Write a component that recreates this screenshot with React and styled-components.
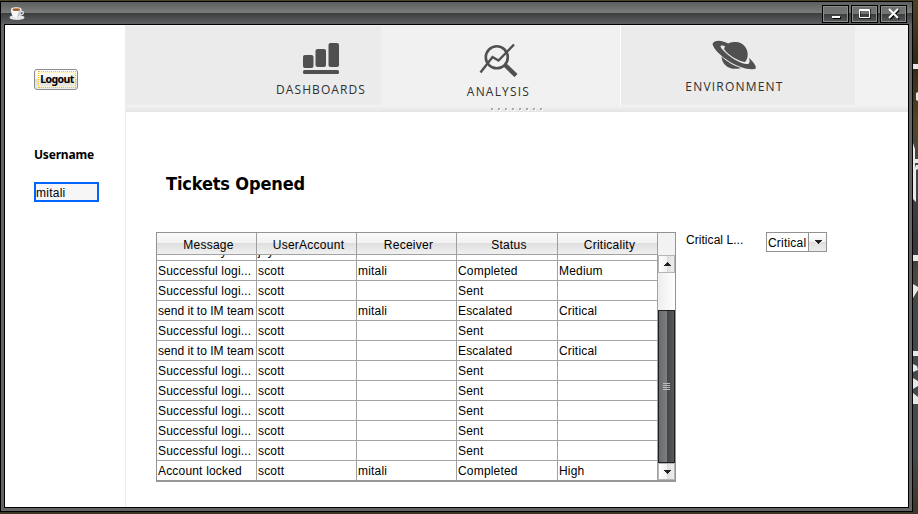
import React from "react";
import styled, { createGlobalStyle } from "styled-components";

const Global = createGlobalStyle`
  *{box-sizing:border-box}
  html,body{margin:0;width:918px;height:514px;overflow:hidden}
  body{font:12px "Liberation Sans",Arial,sans-serif;color:#000}
  svg{display:block;flex:none}
`;
const Desktop = styled.div`
  position:relative;width:918px;height:514px;padding-top:1px;
  background:linear-gradient(#4c4424,#2f2a15 12%,#514824 24%,#46464a 32%,#37373a 49%,#4a493d 53%,#45484c 62%,#46484a 73%,#484b4b 88%,#3b3625);
`;
const Scenery = styled.svg`position:absolute;left:913px;top:0;`;
const Window = styled.div`
  width:913px;height:511px;border:1px solid #000;display:flex;flex-direction:column;
  background:#646464;
`;
const TitleBar = styled.div`
  height:22px;flex:none;display:flex;align-items:center;padding:0 5px 0 7px;gap:2px;
  background:linear-gradient(#5e6060,#7b7d7d 11px,#3c3d3e 11px,#5d5f60);
`;
const Spacer = styled.div`flex:1;`;
const WinButton = styled.div`
  width:27px;height:18px;margin-top:1px;border:1px solid #000;
  box-shadow:inset 0 0 0 1px #8b8d8d;display:flex;align-items:center;justify-content:center;
  background:linear-gradient(#6d6f6f,#747676 50%,#3b3c3d 50%,#57595a);
`;
const Content = styled.div`
  width:905px;height:484px;margin-left:3px;border:1px solid #000;background:#fff;display:flex;
`;
const Side = styled.div`
  width:121px;border-right:1px solid #ececec;padding:44px 0 0 29px;
  font:bold 12px "Noto Sans","Open Sans",sans-serif;
`;
const Logout = styled.div`
  width:44px;height:21px;border:1px solid #8c8c8c;border-radius:3px;padding:1px 2px;
  background:linear-gradient(#fff,#f1f1f1 50%,#dcdcdc 50%,#ededed);
`;
const Focus = styled.div`
  width:38px;height:17px;border:1px dotted #ffc000;box-shadow:inset 0 0 0 1px #fff3b8;margin:0 1px;
  display:flex;align-items:center;justify-content:center;
  font-size:10.5px;letter-spacing:-.55px;white-space:nowrap;line-height:15px;
`;
const FieldLabel = styled.div`margin-top:56px;height:18px;line-height:18px;letter-spacing:-.2px;`;
const Field = styled.div`
  margin-top:18px;width:65px;height:20px;border:2px solid #0064ff;background:#f6f6f6;
  font:12px/18px "Liberation Sans",sans-serif;letter-spacing:.25px;
`;
const Main = styled.div`flex:1;display:flex;flex-direction:column;`;
const Nav = styled.div`
  height:87px;display:flex;flex-direction:column;background:linear-gradient(#f2f2f2 79px,#f3f3f3 80px,#e4e4e4);
`;
const Tabs = styled.div`display:flex;height:79px;margin-top:1px;`;
const Tab = styled.div`
  width:${p => p.$w}px;padding:${p => p.$top}px 0 0 ${p => p.$left}px;
  background:${p => p.$shaded ? "#ebebeb" : "#f1f1f1"};
  border-right:${p => p.$rule ? "1px solid #fff" : "0"};
`;
const TabBody = styled.div`width:${p => p.$w}px;display:flex;flex-direction:column;align-items:center;`;
const TabText = styled.div`
  margin-top:${p => p.$gap}px;font:12px/16px "Open Sans","Noto Sans",sans-serif;color:#303030;
  letter-spacing:${p => p.$ls}px;white-space:nowrap;
`;
const Grip = styled.svg`margin:2px 0 0 365px;`;
const Title = styled.div`
  height:24px;margin:60px 0 0 40px;font:bold 18px/24px "DejaVu Sans Condensed","DejaVu Sans",sans-serif;
  font-stretch:condensed;letter-spacing:-.14px;white-space:nowrap;
`;
const Row = styled.div`display:flex;margin:36px 0 0 30px;`;
const TableBox = styled.div`
  width:520px;height:250px;border:1px solid #939393;border-bottom:2px solid #969696;display:flex;
`;
const Grid = styled.div`width:501px;`;
const cols = "100px 100px 100px 101px 100px";
const Head = styled.div`
  display:grid;grid-template-columns:${cols};height:22px;border-bottom:1px solid #a2a2a2;
`;
const HeadCell = styled.div`
  border-right:1px solid #9e9e9e;text-align:center;line-height:24px;height:21px;padding-left:4px;letter-spacing:.25px;
  background:linear-gradient(#fafafa,#f2f2f2 10px,#dedede 10px,#f0f0f0);
`;
const Viewport = styled.div`
  height:225px;overflow:hidden;display:flex;flex-direction:column;justify-content:flex-end;
`;
const Line = styled.div`
  display:grid;grid-template-columns:${cols};flex:none;
  border-bottom:${p => p.$last ? "0" : "1px solid #a2a2a2"};
  height:${p => p.$last ? 19 : 20}px;
`;
const Cell = styled.div`
  border-right:1px solid #a2a2a2;padding-left:1px;line-height:21px;height:19px;white-space:nowrap;overflow:hidden;
  letter-spacing:${p => p.$tight ? 0.02 : 0.18}px;
`;
const Scroll = styled.div`
  width:17px;display:flex;flex-direction:column;padding-top:22px;background:#f2f2f2;
`;
const Arrow = styled.div`
  height:${p => p.$down ? 17 : 18}px;border:1px solid #b5b5b5;display:flex;align-items:center;justify-content:center;
  background:linear-gradient(90deg,#fff,#f1f1f1 50%,#dcdcdc 50%,#eee);
`;
const Track = styled.div`height:37px;background:linear-gradient(90deg,#ededed,#fff);`;
const Thumb = styled.div`
  height:153px;border:1px solid #1e2021;background:linear-gradient(90deg,#686a6b,#7c7e7f 50%,#414345 50%,#58595a);
  display:flex;align-items:center;justify-content:center;
`;
const FilterLabel = styled.div`margin-left:10px;width:80px;line-height:16px;letter-spacing:.05px;`;
const Combo = styled.div`
  width:61px;height:20px;border:1px solid #929292;display:flex;line-height:20px;padding-left:1px;letter-spacing:.2px;
`;
const ComboText = styled.div`width:41px;white-space:nowrap;`;
const ComboButton = styled.div`
  width:18px;border-left:1px solid #929292;display:flex;align-items:center;justify-content:center;
  background:linear-gradient(#fff,#f2f2f2 50%,#dedede 50%,#ededed);
`;

const S = (receiver, status, criticality, message = "Successful logi...") =>
  [message, "scott", receiver, status, criticality];
const rows = [
  ["tickets today", "jay", "", "", ""],
  S("mitali", "Completed", "Medium"),
  S("", "Sent", ""),
  S("mitali", "Escalated", "Critical", "send it to IM team"),
  S("", "Sent", ""),
  S("", "Escalated", "Critical", "send it to IM team"),
  S("", "Sent", ""), S("", "Sent", ""), S("", "Sent", ""), S("", "Sent", ""), S("", "Sent", ""),
  S("mitali", "Completed", "High", "Account locked"),
];

const Triangle = ({ up }) => (
  <svg width="8" height="4" shapeRendering="crispEdges">
    <path d={up ? "M0 4L4 0L8 4Z" : "M0 0H8L4 4Z"} fill="#222" />
  </svg>
);

export default function App() {
  return (
    <>
      <Global />
      <Desktop>
        <Scenery width="5" height="514">
          <path d="M0 64h5v5H0zM3 93l2-1v9l-2-1zM0 143l2 6v10h3v4H2v5l1-3h2v4l-2 1v32l-3-3zM0 255h5v6H0zM0 284l5 3v3l-5 8zM0 351h5v5H0v8l4 2 1 4-5 2v6l5 3v5l-5 3v4l5 4v7H0z" fill="#e8e8e6" />
        </Scenery>
        <Window>
          <TitleBar>
            <svg width="18" height="16" viewBox="0 0 18 16">
              <ellipse cx="9" cy="12.5" rx="7.5" ry="2.6" fill="#e5e5e5" />
              <path d="M12.5 6.5c4-1.2 4 3.2-.5 3.4" fill="none" stroke="#d9dde2" strokeWidth="1.3" />
              <path d="M3 4.5c0 4 1.5 7.2 3.5 8h3.5c2.5-1.5 3.5-4 3.5-8z" fill="#f7f7f7" />
              <path d="M9 12.5c2.6-1.1 4-4 4.2-7.5l-2.2 1z" fill="#bec2c7" />
              <ellipse cx="8.2" cy="4.5" rx="5.2" ry="2.2" fill="#fff" />
              <ellipse cx="8.3" cy="4.7" rx="4" ry="1.4" fill="#a4622d" />
            </svg>
            <Spacer />
            <WinButton><svg width="10" height="10"><path d="M2 8h8v2H2z" fill="#000" /><path d="M1 7h8v2H1z" fill="#fff" /></svg></WinButton>
            <WinButton><svg width="13" height="11"><path d="M2 2h11v9H2z" fill="none" stroke="#000" strokeWidth="1" /><path d="M1.5 1.5h10v8h-10zM1 2.5h11" fill="none" stroke="#fff" /></svg></WinButton>
            <WinButton><svg width="13" height="12"><path d="M3 2l9 9M12 2l-9 9" stroke="#000" strokeWidth="2" /><path d="M2 1l9 9M11 1L2 10" stroke="#fff" strokeWidth="2" /></svg></WinButton>
          </TitleBar>
          <Content>
            <Side>
              <Logout><Focus>Logout</Focus></Logout>
              <FieldLabel>Username</FieldLabel>
              <Field>mitali</Field>
            </Side>
            <Main>
              <Nav>
                <Tabs>
                  <Tab $w={255} $left={150} $top={17} $shaded>
                    <TabBody $w={90}>
                      <svg width="36" height="31" fill="#505050">
                        <rect y="12" width="10.5" height="13" rx="2" />
                        <rect x="12.5" y="6" width="10.5" height="18" rx="2" />
                        <rect x="25.5" width="10.5" height="24" rx="2" />
                        <rect y="27" width="36" height="4" rx="1.5" />
                      </svg>
                      <TabText $gap={8} $ls={1.1}>DASHBOARDS</TabText>
                    </TabBody>
                  </Tab>
                  <Tab $w={240} $left={85} $top={17} $rule>
                    <TabBody $w={65}>
                      <svg width="39" height="34" viewBox="0 0 39 34" fill="none" stroke="#505050">
                        <circle cx="17.8" cy="14.3" r="11" strokeWidth="2.6" />
                        <path d="M1.5 29.5L13.5 14L19.5 17.5L35 1.5" strokeWidth="2.4" />
                        <path d="M26 22L37 32.5" strokeWidth="4.4" />
                      </svg>
                      <TabText $gap={7} $ls={1.2}>ANALYSIS</TabText>
                    </TabBody>
                  </Tab>
                  <Tab $w={234} $left={64} $top={14} $shaded>
                    <TabBody $w={99}>
                      <svg width="45" height="31" viewBox="0 0 45 31">
                        <path d="M1 3C4-1 12 1 17 4L14 7C9 4 7 6 10 9C17 17 28 24 35 24C38 24 38 21 37 18C43 23 46 29 42 29C32 31 11 20 3 9C1 6 0 4 1 3Z" fill="#505050" />
                        <path d="M12 9C13 5 17 2 22 2C31 1 37 9 35.5 17C35 19 34 21 33 22C26 21 16 15 12 9Z" fill="#505050" />
                        <path d="M9.5 16.5C14 21 22 26 29 28C19 31 10 26 9.5 16.5Z" fill="#505050" />
                      </svg>
                      <TabText $gap={8} $ls={1.2}>ENVIRONMENT</TabText>
                    </TabBody>
                  </Tab>
                </Tabs>
                <Grip width="54" height="4">
                  {Array.from({ length: 8 }, (_, i) => <g key={i}><rect x={i * 7 + 1} y="2" width="2" height="2" fill="#fff" /><rect x={i * 7} y="1" width="2" height="2" fill="#aaa" /></g>)}
                </Grip>
              </Nav>
              <Title>Tickets Opened</Title>
              <Row>
                <TableBox>
                  <Grid>
                    <Head>{["Message", "UserAccount", "Receiver", "Status", "Criticality"].map(h => <HeadCell key={h}>{h}</HeadCell>)}</Head>
                    <Viewport>
                      {rows.map((r, i) => (
                        <Line key={i} $last={i === rows.length - 1}>
                          {r.map((c, j) => <Cell key={j} $tight={c.startsWith("send")}>{c}</Cell>)}
                        </Line>
                      ))}
                    </Viewport>
                  </Grid>
                  <Scroll>
                    <Arrow><Triangle up /></Arrow>
                    <Track />
                    <Thumb><svg width="7" height="8" shapeRendering="crispEdges"><path d="M0 .5h7M0 2.5h7M0 4.5h7M0 6.5h7" stroke="#bbb" /></svg></Thumb>
                    <Arrow $down><Triangle /></Arrow>
                  </Scroll>
                </TableBox>
                <FilterLabel>Critical L...</FilterLabel>
                <Combo><ComboText>Critical</ComboText><ComboButton><Triangle /></ComboButton></Combo>
              </Row>
            </Main>
          </Content>
        </Window>
      </Desktop>
    </>
  );
}
